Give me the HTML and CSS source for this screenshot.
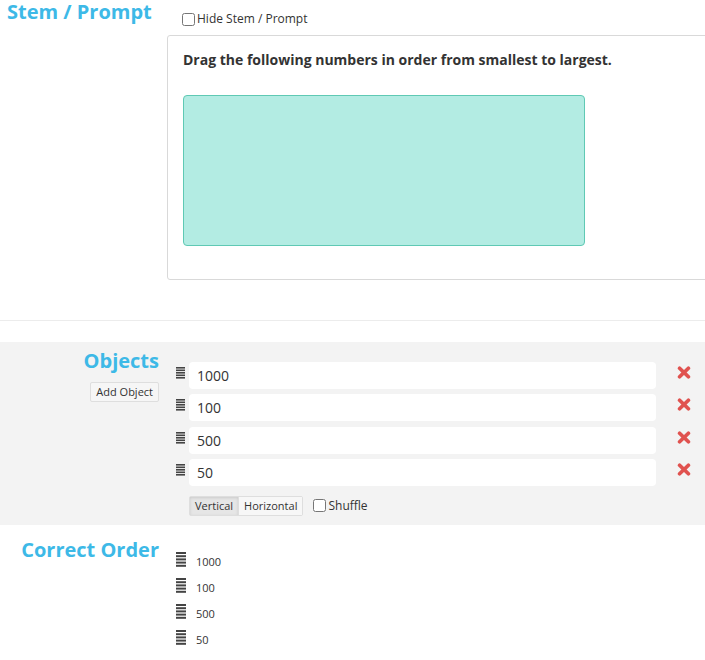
FILE: index.html
```html
<!DOCTYPE html>
<html>
<head>
<meta charset="utf-8">
<link rel="stylesheet" href="styles.css">
</head>
<body>
<div class="page">
  <section class="row stem">
    <div class="label label-left">
      <h2 class="title">Stem / Prompt</h2>
    </div>
    <div class="content">
      <label class="check"><input type="checkbox" class="cb">Hide Stem / Prompt</label>
      <div class="card">
        <p class="prompt">Drag the following numbers in order from smallest to largest.</p>
        <div class="dropzone"></div>
      </div>
    </div>
  </section>

  <hr class="divider">

  <section class="row objects">
    <div class="label label-right">
      <h2 class="title">Objects</h2>
      <button class="btn">Add Object</button>
    </div>
    <div class="content obj-content">
      <div class="obj-list">
        <div class="obj">
          <svg class="grip" width="9" height="12" viewBox="0 0 9 12"><rect y="0" width="9" height="1.6" fill="#444"/><rect y="2.5" width="9" height="1.6" fill="#444"/><rect y="5" width="9" height="1.6" fill="#444"/><rect y="7.5" width="9" height="1.6" fill="#444"/><rect y="10" width="9" height="1.6" fill="#444"/></svg>
          <input class="field" type="text" value="1000">
          <svg class="del" width="14" height="13" viewBox="0 0 14 13"><path d="M2.6 2.2L11.4 10.8M11.4 2.2L2.6 10.8" stroke="#e0524f" stroke-width="3.7" stroke-linecap="round"/></svg>
        </div>
        <div class="obj">
          <svg class="grip" width="9" height="12" viewBox="0 0 9 12"><rect y="0" width="9" height="1.6" fill="#444"/><rect y="2.5" width="9" height="1.6" fill="#444"/><rect y="5" width="9" height="1.6" fill="#444"/><rect y="7.5" width="9" height="1.6" fill="#444"/><rect y="10" width="9" height="1.6" fill="#444"/></svg>
          <input class="field" type="text" value="100">
          <svg class="del" width="14" height="13" viewBox="0 0 14 13"><path d="M2.6 2.2L11.4 10.8M11.4 2.2L2.6 10.8" stroke="#e0524f" stroke-width="3.7" stroke-linecap="round"/></svg>
        </div>
        <div class="obj">
          <svg class="grip" width="9" height="12" viewBox="0 0 9 12"><rect y="0" width="9" height="1.6" fill="#444"/><rect y="2.5" width="9" height="1.6" fill="#444"/><rect y="5" width="9" height="1.6" fill="#444"/><rect y="7.5" width="9" height="1.6" fill="#444"/><rect y="10" width="9" height="1.6" fill="#444"/></svg>
          <input class="field" type="text" value="500">
          <svg class="del" width="14" height="13" viewBox="0 0 14 13"><path d="M2.6 2.2L11.4 10.8M11.4 2.2L2.6 10.8" stroke="#e0524f" stroke-width="3.7" stroke-linecap="round"/></svg>
        </div>
        <div class="obj">
          <svg class="grip" width="9" height="12" viewBox="0 0 9 12"><rect y="0" width="9" height="1.6" fill="#444"/><rect y="2.5" width="9" height="1.6" fill="#444"/><rect y="5" width="9" height="1.6" fill="#444"/><rect y="7.5" width="9" height="1.6" fill="#444"/><rect y="10" width="9" height="1.6" fill="#444"/></svg>
          <input class="field" type="text" value="50">
          <svg class="del" width="14" height="13" viewBox="0 0 14 13"><path d="M2.6 2.2L11.4 10.8M11.4 2.2L2.6 10.8" stroke="#e0524f" stroke-width="3.7" stroke-linecap="round"/></svg>
        </div>
      </div>
      <div class="controls">
        <div class="btn-group">
          <button class="seg active">Vertical</button><button class="seg">Horizontal</button>
        </div>
        <label class="check check-inline"><input type="checkbox" class="cb">Shuffle</label>
      </div>
    </div>
  </section>

  <section class="row order">
    <div class="label label-right">
      <h2 class="title">Correct Order</h2>
    </div>
    <div class="content order-content">
      <div class="order-item"><svg class="grip-lg" width="10" height="15" viewBox="0 0 10 15"><rect y="0" width="10" height="2" fill="#444"/><rect y="3.2" width="10" height="2" fill="#444"/><rect y="6.4" width="10" height="2" fill="#444"/><rect y="9.6" width="10" height="2" fill="#444"/><rect y="12.8" width="10" height="2" fill="#444"/></svg><span>1000</span></div>
      <div class="order-item"><svg class="grip-lg" width="10" height="15" viewBox="0 0 10 15"><rect y="0" width="10" height="2" fill="#444"/><rect y="3.2" width="10" height="2" fill="#444"/><rect y="6.4" width="10" height="2" fill="#444"/><rect y="9.6" width="10" height="2" fill="#444"/><rect y="12.8" width="10" height="2" fill="#444"/></svg><span>100</span></div>
      <div class="order-item"><svg class="grip-lg" width="10" height="15" viewBox="0 0 10 15"><rect y="0" width="10" height="2" fill="#444"/><rect y="3.2" width="10" height="2" fill="#444"/><rect y="6.4" width="10" height="2" fill="#444"/><rect y="9.6" width="10" height="2" fill="#444"/><rect y="12.8" width="10" height="2" fill="#444"/></svg><span>500</span></div>
      <div class="order-item"><svg class="grip-lg" width="10" height="15" viewBox="0 0 10 15"><rect y="0" width="10" height="2" fill="#444"/><rect y="3.2" width="10" height="2" fill="#444"/><rect y="6.4" width="10" height="2" fill="#444"/><rect y="9.6" width="10" height="2" fill="#444"/><rect y="12.8" width="10" height="2" fill="#444"/></svg><span>50</span></div>
    </div>
  </section>
</div>
</body>
</html>
```

FILE: styles.css
```css
html, body {
  margin: 0;
  padding: 0;
  background: #fff;
}
body {
  font-family: "Open Sans", "Noto Sans", sans-serif;
  color: #333;
  overflow: hidden;
}
.page {
  width: 705px;
  overflow: hidden;
}
.row {
  display: grid;
  grid-template-columns: 167px 1fr;
}
.label {
  display: flex;
  flex-direction: column;
}
.label-left {
  padding-left: 7px;
  align-items: flex-start;
}
.label-right {
  padding-right: 8px;
  align-items: flex-end;
}
.title {
  margin: 0;
  font-size: 20px;
  line-height: 24px;
  font-weight: 700;
  color: #3db9e7;
  white-space: nowrap;
}
.check {
  display: flex;
  align-items: center;
  font-size: 12px;
  line-height: 14px;
  color: #333;
}
.cb {
  width: 13px;
  height: 13px;
  margin: 0 2px 0 0;
}
.stem .check {
  margin: 12px 0 0 15px;
}
.card {
  margin-top: 9px;
  margin-right: -20px;
  border: 1px solid #d9d9d9;
  border-radius: 3px;
  padding: 15px 15px 33px 15px;
}
.prompt {
  margin: 0;
  font-size: 14px;
  line-height: 18px;
  font-weight: 700;
  color: #333;
}
.dropzone {
  margin-top: 26px;
  width: 400px;
  height: 149px;
  background: #b3ece3;
  border: 1px solid #5fc9b4;
  border-radius: 4px;
}
.divider {
  margin: 40px 0 21px 0;
  border: 0;
  border-top: 1px solid #ececec;
  height: 0;
}
.objects {
  background: #f3f3f3;
  padding-top: 7px;
  padding-bottom: 9px;
}
.btn {
  margin-top: 9px;
  font-family: inherit;
  font-size: 11px;
  line-height: 18px;
  height: 20px;
  padding: 0 5px;
  background: #f6f6f6;
  border: 1px solid #dedede;
  border-radius: 2px;
  color: #333;
}
.obj-content {
  padding-top: 13px;
  padding-left: 9px;
  padding-right: 14px;
}
.obj-list {
  display: flex;
  flex-direction: column;
  gap: 5.3px;
}
.obj {
  display: flex;
  align-items: flex-start;
}
.grip {
  margin-top: 5px;
  flex: none;
}
.field {
  flex: 1;
  margin-left: 4px;
  height: 27px;
  box-sizing: border-box;
  border: 0;
  border-radius: 4px;
  background: #fff;
  padding: 0 8px;
  font-family: inherit;
  font-size: 14px;
  color: #333;
  outline: none;
}
.del {
  flex: none;
  margin-left: 21px;
  margin-top: 4px;
}
.controls {
  display: flex;
  align-items: center;
  margin-top: 10px;
  margin-left: 13px;
}
.btn-group {
  display: flex;
  border: 1px solid #dedede;
  border-radius: 2px;
}
.seg {
  font-family: inherit;
  font-size: 11px;
  line-height: 18px;
  height: 18px;
  padding: 0 5px;
  border: 0;
  background: #f7f7f7;
  color: #333;
}
.seg.active {
  background: #e6e6e6;
  box-shadow: inset 0 1px 3px rgba(0,0,0,0.12);
  border-right: 1px solid #dedede;
}
.check-inline {
  margin-left: 10px;
}
.order {
  padding-top: 13px;
}
.order-content {
  padding-top: 11px;
  padding-left: 9px;
}
.order-item {
  display: flex;
  align-items: flex-start;
  height: 26px;
  font-size: 11px;
  line-height: 26px;
  color: #333;
}
.grip-lg {
  flex: none;
  margin-top: 3px;
  margin-right: 10px;
}
```
